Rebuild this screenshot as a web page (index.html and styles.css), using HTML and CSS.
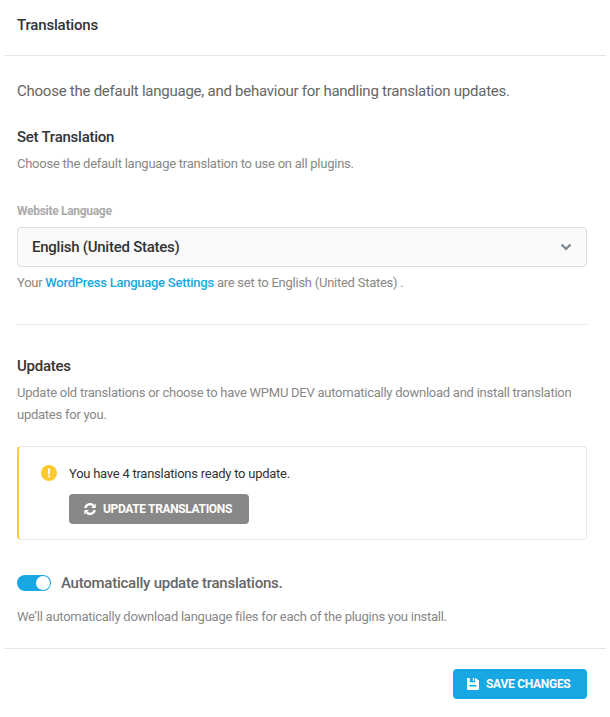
FILE: index.html
```html
<!DOCTYPE html>
<html lang="en">
<head>
<meta charset="utf-8">
<title>Translations</title>
<link rel="stylesheet" href="styles.css">
</head>
<body>
<main class="panel">
  <header class="panel-head"><h1>Translations</h1></header>
  <div class="panel-body">
    <p class="intro">Choose the default language, and behaviour for handling translation updates.</p>
    <section class="set">
      <h2>Set Translation</h2>
      <p class="desc">Choose the default language translation to use on all plugins.</p>
      <label class="field-label">Website Language</label>
      <div class="select">
        <span>English (United States)</span>
        <svg class="chev" width="12" height="8" viewBox="0 0 12 8"><path d="M1.5 1.500 6 5.800l4.500-4.300" fill="none" stroke="#7f8a96" stroke-width="2.400"/></svg>
      </div>
      <p class="desc note">Your <a href="#">WordPress Language Settings</a> are set to English (United States) .</p>
    </section>
    <hr class="rule">
    <section class="updates">
      <h2>Updates</h2>
      <p class="desc multi">Update old translations or choose to have WPMU DEV automatically download and install translation updates for you.</p>
      <div class="notice">
        <div class="notice-row">
          <svg class="warn" width="16" height="16" viewBox="0 0 16 16"><circle cx="8" cy="8" r="8" fill="#fecb2f"/><rect x="7" y="3.500" width="2" height="5.500" rx=".6" fill="#fff"/><rect x="7" y="10.300" width="2" height="2" rx=".6" fill="#fff"/></svg>
          <span>You have 4 translations ready to update.</span>
        </div>
        <button class="btn btn-grey" type="button">
          <svg width="12" height="12" viewBox="0 0 12 12"><path d="M1.300 5A4.800 4.800 0 0 1 9.400 2.600" fill="none" stroke="#fff" stroke-width="2.400"/><path d="M11.700 .4v4.600H7.100z" fill="#fff"/><path d="M10.700 7A4.800 4.800 0 0 1 2.600 9.400" fill="none" stroke="#fff" stroke-width="2.400"/><path d="M.3 11.600V7h4.600z" fill="#fff"/></svg>
          UPDATE TRANSLATIONS
        </button>
      </div>
      <div class="toggle-row">
        <span class="toggle"><span class="knob"></span></span>
        <strong>Automatically update translations.</strong>
      </div>
      <p class="desc auto">We’ll automatically download language files for each of the plugins you install.</p>
    </section>
  </div>
  <footer class="panel-foot">
    <button class="btn btn-blue" type="button">
      <svg width="12" height="12" viewBox="0 0 12 12"><path fill-rule="evenodd" d="M1 0h1.800v3.700a.5.5 0 0 0 .5.5h4.400a.5.500 0 0 0 .5-.5V0h.3L12 2.500V11a1 1 0 0 1-1 1H1a1 1 0 0 1-1-1V1a1 1 0 0 1 1-1zm1.500 7v1.500h7V7zM5.800 0H7.200v2.700H5.800z" fill="#fff"/></svg>
      SAVE CHANGES
    </button>
  </footer>
</main>
</body>
</html>
```
FILE: styles.css
```css
* { box-sizing: border-box; }
html, body { margin: 0; background: #fff; }
body { font-family: Roboto, "Liberation Sans", sans-serif; color: #888; letter-spacing: -.25px; }
.panel { width: 602px; margin-left: 4px; }
.panel-head { height: 56px; padding: 15px 13px 0; border-bottom: 1px solid #e6e6e6; }
h1 { margin: 0; font-size: 15px; line-height: 20px; font-weight: 500; color: #333; letter-spacing: -.17px; }
.panel-body { padding: 24px 19px 0 13px; }
.intro { margin: 0; font-size: 15px; line-height: 22px; color: #666; }
h2 { margin: 0; font-size: 15px; line-height: 22px; font-weight: 500; color: #333; }
.desc { margin: 0; font-size: 13px; line-height: 22px; color: #888; }
.set { margin-top: 24px; }
.set h2 { margin-bottom: 5px; }
.field-label { display: block; margin-top: 28px; font-size: 12px; line-height: 16px; font-weight: 700; color: #aaa; letter-spacing: -.3px; }
.select { display: flex; align-items: center; justify-content: space-between; height: 40px; margin-top: 8px; padding: 0 14px; background: #fafafa; border: 1px solid #ddd; border-radius: 4px; font-size: 15px; font-weight: 500; color: #333; }
.note { margin-top: 5px; }
a { color: #17a8e3; font-weight: 500; text-decoration: none; }
.rule { height: 1px; margin: 30px 0 0; border: 0; background: #e6e6e6; }
.updates { padding-top: 30px; }
.updates h2 { margin-bottom: 5px; }
.notice { height: 94px; margin-top: 20px; padding: 15px 0 0 22px; border: 1px solid #e6e6e6; border-left: 2px solid #fecb2f; border-radius: 4px; }
.notice-row { display: flex; align-items: center; gap: 12px; height: 22px; font-size: 13px; color: #333; }
.btn { display: inline-flex; align-items: center; height: 30px; border: 0; border-radius: 4px; font-family: inherit; font-size: 12px; font-weight: 700; letter-spacing: -.35px; color: #fff; }
.btn-grey { width: 180px; margin: 10px 0 0 28px; padding: 0 0 0 15px; gap: 7px; background: #888; }
.toggle-row { display: flex; align-items: center; gap: 10px; height: 22px; margin-top: 32px; }
.toggle { display: block; width: 34px; height: 16px; padding: 1px 1px 1px 19px; background: #17a8e3; border-radius: 8px; }
.knob { display: block; width: 14px; height: 14px; border-radius: 50%; background: #fff; }
.toggle-row strong { font-size: 15px; font-weight: 500; color: #666; }
.auto { margin-top: 12px; }
.panel-foot { display: flex; justify-content: flex-end; height: 69px; margin-top: 20px; padding: 20px 19px 0 0; border-top: 1px solid #e6e6e6; }
.btn-blue { width: 134px; padding: 0 0 0 14px; gap: 7px; background: #17a8e3; letter-spacing: -.28px; }
```
